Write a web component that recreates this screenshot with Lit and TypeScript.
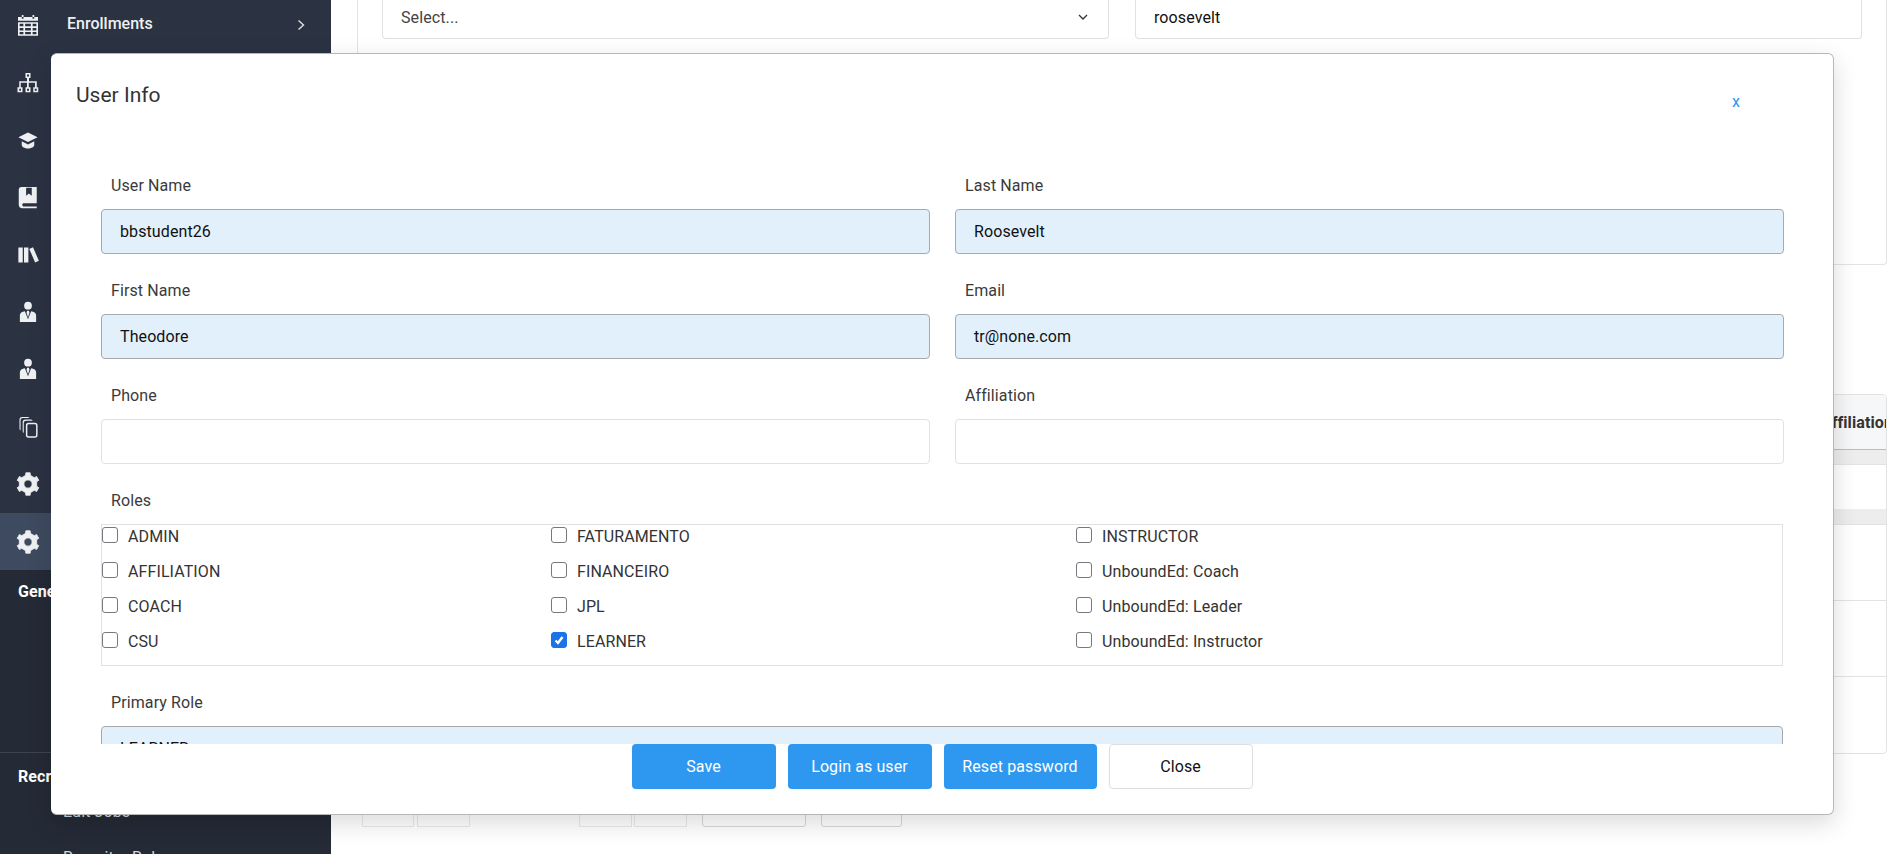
import { LitElement, css, html, svg } from 'lit';
import { customElement } from 'lit/decorators.js';

// six toothed cog, easier to compute than to write out by hand
function cogPath() {
    const points: string[] = [];
    for (let i = 0; i < 6; i++) {
        const mid = i * 60 - 90;
        for (const [offset, radius] of [[-30, 6.9], [-15, 7.2], [-11, 9.1], [11, 9.1], [15, 7.2]]) {
            const angle = ((mid + offset) * Math.PI) / 180;
            points.push(`${(12 + radius * Math.cos(angle)).toFixed(2)} ${(12 + radius * Math.sin(angle)).toFixed(2)}`);
        }
    }
    return `M${points.join('L')}ZM12 8.700a3.300 3.300 0 1 0 0 6.600 3.300 3.300 0 0 0 0-6.600z`;
}

const personIcon = svg`<path d="M12 3.800a3.100 3.100 0 1 1 0 6.200 3.100 3.100 0 0 1 0-6.200zM5.500 20v-5.400c0-1.800 1.700-3.100 4-3.300l2.500 6.400 2.500-6.400c2.300.2 4 1.500 4 3.300V20zM11.300 11h1.400l.5 1.500-1.200 3.700-1.200-3.700z"/>`;
const cogIcon = svg`<path d=${cogPath()} fill-rule="evenodd" stroke="#eef0f2" stroke-width=".7" stroke-linejoin="round"/>`;

const railIcons = [
    svg`<path transform="translate(0 .5)" d="M4 5h16v3H4zM7 3.500h1.400v3H7zM15.600 3.500H17v3h-1.400zM4 9.200h16V20H4zM5.300 10.500v2h3v-2zm4.400 0v2h4.600v-2zm6 0v2h3v-2zM5.300 13.800v2h3v-2zm4.400 0v2h4.600v-2zm6 0v2h3v-2zM5.300 17v1.800h3V17zm4.400 0v1.800h4.600V17zm6 0v1.800h3V17z" fill-rule="evenodd"/>`,
    svg`<path transform="translate(0 1.200)" d="M10 3.500h4v4h-1.200v2.700H19V15h1.200v4h-4v-4h1.400v-3.600h-5V15H14v4h-4v-4h1.200v-3.600h-5V15h1.400v4h-4v-4H5v-4.800h6.200V7.500H10zM11.200 4.700v1.600h1.600V4.700zM5 16.200v1.600h1.400v-1.600zm6.200 0v1.600h1.600v-1.600zm6.200 0v1.600h1.600v-1.600z" fill-rule="evenodd"/>`,
    svg`<path d="M12 6 4.300 9.800 12 13.600l7.700-3.800zM7 13v3c0 1.400 2.300 2.800 5 2.800s5-1.400 5-2.800v-3l-5 2.500z"/>`,
    svg`<path d="M6.500 4H19v13H8a1.700 1.700 0 0 0 0 2.500h11V21H7.500A3 3 0 0 1 4.600 18V6A2 2 0 0 1 6.500 4zM10.500 4.500V11l2.200-1.800 2.300 1.800V4.500z" fill-rule="evenodd"/>`,
    svg`<path transform="translate(0 -1.500)" d="M4.300 7.500h3.500v12H4.300zM8.800 7.500h3.500v12H8.800zM13 8.600l3-1.300 4.700 10.800-3 1.300z"/>`,
    personIcon,
    personIcon,
    svg`<g transform="translate(1.800 1.800) scale(.85)"><path d="M4 4.500A2.500 2.500 0 0 1 6.500 2.500h5a2.500 2.500 0 0 1 2 1H6.800A2 2 0 0 0 5 5.500v9.700a2.300 2.300 0 0 1-1-1.900zM7 7.500A2.500 2.500 0 0 1 9.500 5h5a2.500 2.500 0 0 1 2 1H9.800A2 2 0 0 0 8 8v9.700a2.300 2.300 0 0 1-1-1.900zM12.500 8h6A2.500 2.500 0 0 1 21 10.500v9A2.500 2.500 0 0 1 18.500 22h-6a2.500 2.500 0 0 1-2.500-2.500v-9A2.500 2.500 0 0 1 12.500 8zm0 1.400a1.100 1.100 0 0 0-1.100 1.100v9a1.100 1.100 0 0 0 1.100 1.100h6a1.100 1.100 0 0 0 1.100-1.100v-9a1.100 1.100 0 0 0-1.100-1.100z" fill-rule="evenodd"/></g>`,
    cogIcon,
];

const roleColumns = [
    ['ADMIN', 'AFFILIATION', 'COACH', 'CSU'],
    ['FATURAMENTO', 'FINANCEIRO', 'JPL', 'LEARNER'],
    ['INSTRUCTOR', 'UnboundEd: Coach', 'UnboundEd: Leader', 'UnboundEd: Instructor'],
];

const fields = [
    ['User Name', 'bbstudent26'],
    ['Last Name', 'Roosevelt'],
    ['First Name', 'Theodore'],
    ['Email', 'tr@none.com'],
    ['Phone', ''],
    ['Affiliation', ''],
];

// widths and trailing gaps of the pager boxes that peek out under the dialog
const pagerBoxes = [
    { width: 52, gap: 3, solid: false },
    { width: 53, gap: 109, solid: false },
    { width: 53, gap: 2, solid: false },
    { width: 53, gap: 15, solid: false },
    { width: 104, gap: 15, solid: true },
    { width: 81, gap: 0, solid: true },
];

@customElement('app-root')
export class AppRoot extends LitElement {
    static styles = css`
        :host {
            display: block;
            position: relative;
            height: 854px;
            overflow: hidden;
            background: #fff;
            font-family: Roboto, 'Liberation Sans', sans-serif;
            font-size: 16px;
            letter-spacing: 0.1px;
            color: #333;
        }

        .page {
            display: flex;
            height: 854px;
        }

        .sidebar {
            width: 331px;
            flex: none;
            display: flex;
            flex-direction: column;
            background: #2b3242;
            color: #eef0f2;
            overflow: hidden;
        }

        .item {
            height: 57.4px;
            flex: none;
            display: flex;
            align-items: center;
            padding-left: 13px;
            box-sizing: border-box;
        }

        .item.first {
            height: 50px;
            margin-bottom: 3.7px;
        }

        .item.active {
            background: #3e4a5f;
        }

        .item svg {
            width: 30px;
            height: 30px;
            fill: #eef0f2;
            flex: none;
        }

        .item-label {
            margin-left: 24px;
            margin-bottom: 3px;
            font-weight: 500;
            letter-spacing: 0;
            flex: 1;
        }

        .item .chevron {
            width: 12px;
            height: 14px;
            margin-right: 24px;
            fill: none;
            stroke: #dfe2e6;
            stroke-width: 1.4;
        }

        .lower {
            flex: 1;
            background: #242a36;
        }

        .lower-title {
            font-weight: 700;
            color: #fff;
            padding-left: 18px;
        }

        .general {
            margin-top: 11.5px;
        }

        .divider {
            height: 1px;
            background: #3c4350;
            margin-top: 151.5px;
        }

        .recruit {
            margin-top: 14px;
        }

        .sub-link {
            color: #d5d8dc;
            padding-left: 63px;
            margin-top: 16px;
        }

        .sub-link + .sub-link {
            margin-top: 27px;
        }

        .content {
            flex: 1;
            padding: 0 14px 0 26px;
            min-width: 0;
        }

        .top-panel {
            height: 265px;
            box-sizing: border-box;
            border: 1px solid #e2e3e5;
            border-top: none;
            border-radius: 0 0 4px 4px;
            padding: 0 24px;
        }

        .filters {
            display: grid;
            grid-template-columns: 727px 727px;
            column-gap: 26px;
        }

        .filter {
            height: 39px;
            box-sizing: border-box;
            border: 1px solid #dfe1e4;
            border-top: none;
            border-radius: 0 0 4px 4px;
            display: flex;
            align-items: center;
            justify-content: space-between;
            padding: 0 20px 4px 18px;
            color: #444;
        }

        .filter.value {
            color: #111;
        }

        .filter svg {
            width: 10px;
            height: 6px;
            fill: none;
            stroke: #333;
            stroke-width: 1.3;
        }

        .table {
            margin-top: 129px;
            height: 360px;
            box-sizing: border-box;
            border: 1px solid #e2e3e5;
            border-radius: 4px;
            overflow: hidden;
        }

        .thead {
            height: 54px;
            background: #f6f7f8;
            border-bottom: 1px solid #b9bcc0;
            display: flex;
            justify-content: flex-end;
            align-items: center;
            font-weight: 700;
            white-space: nowrap;
            overflow: hidden;
        }

        .thead span {
            margin-right: -7px;
        }

        .band {
            height: 15px;
            background: #ededed;
            border-bottom: 1px solid #e2e3e5;
        }

        .band.short {
            height: 14px;
        }

        .blank {
            height: 44px;
        }

        .row {
            height: 75px;
            border-bottom: 1px solid #e2e3e5;
        }

        .pager {
            display: flex;
            margin: 36px 0 0 5px;
        }

        .pager div {
            box-sizing: border-box;
            height: 37px;
            border: 1px solid #e9e9e9;
        }

        .pager div.solid {
            border-color: #d8d8d8;
            border-radius: 3px;
        }

        .modal {
            position: absolute;
            left: 51px;
            top: 53px;
            width: 1783px;
            height: 762px;
            box-sizing: border-box;
            background: #fff;
            border: 1px solid #b5b7ba;
            border-left: none;
            border-radius: 6px;
            box-shadow: 0 8px 24px rgba(0, 0, 0, 0.15);
            display: flex;
            flex-direction: column;
        }

        .modal-head {
            height: 120px;
            flex: none;
            display: flex;
            justify-content: space-between;
            padding: 25px 93px 0 25px;
            box-sizing: border-box;
        }

        .modal-title {
            font-size: 21px;
            line-height: 32px;
            letter-spacing: 0;
            color: #333;
        }

        .modal-x {
            color: #2e98f1;
            font-size: 16px;
            line-height: 24px;
            margin-top: 11px;
        }

        .modal-body {
            flex: none;
            height: 570px;
            overflow: hidden;
            padding: 0 50px;
        }

        .grid {
            display: grid;
            grid-template-columns: 829px 829px;
            column-gap: 25px;
        }

        .field-label,
        .group-label {
            padding-left: 10px;
            height: 35px;
            line-height: 24px;
            color: #3a3a3a;
        }

        .input {
            height: 45px;
            box-sizing: border-box;
            border: 1px solid #a6aaaf;
            border-radius: 4px;
            background: #e2f0fc;
            color: #111;
            padding: 0 18px;
            display: flex;
            align-items: center;
            margin-bottom: 25px;
        }

        .input.empty {
            background: #fff;
            border-color: #dfe1e4;
        }

        .roles {
            height: 142px;
            box-sizing: border-box;
            width: 1682px;
            border: 1px solid #dfe1e4;
            display: grid;
            grid-template-columns: 449px 525px 1fr;
        }

        .role {
            height: 35px;
            display: flex;
            position: relative;
            padding-left: 26px;
            line-height: 24px;
            color: #333;
        }

        .check {
            position: absolute;
            left: 0;
            top: 2px;
            width: 16px;
            height: 16px;
            box-sizing: border-box;
            border: 1px solid #76797d;
            border-radius: 3px;
            background: #fff;
        }

        .check.on {
            background: #1a73e8;
            border-color: #1a73e8;
            display: flex;
            align-items: center;
            justify-content: center;
        }

        .check svg {
            width: 12px;
            height: 12px;
            fill: none;
            stroke: #fff;
            stroke-width: 2.4;
        }

        .primary-label {
            margin-top: 25px;
        }

        .modal-foot {
            flex: 1;
            display: flex;
            justify-content: center;
            gap: 12px;
        }

        .btn {
            height: 45px;
            width: 144px;
            box-sizing: border-box;
            border-radius: 4px;
            background: #2e98f1;
            color: #fff;
            display: flex;
            align-items: center;
            justify-content: center;
        }

        .btn.wide {
            width: 153px;
        }

        .btn.plain {
            background: #fff;
            border: 1px solid #dcdee1;
            color: #111;
        }
    `;

    render() {
        return html`
            <div class="page">
                <nav class="sidebar">
                    <div class="item first">
                        <svg viewBox="0 0 24 24">${railIcons[0]}</svg>
                        <span class="item-label">Enrollments</span>
                        <svg class="chevron" viewBox="0 0 12 14"><path d="M3.500 2.500 8.500 7l-5 4.500" /></svg>
                    </div>
                    ${railIcons.slice(1).map(
                        (icon) => html`<div class="item"><svg viewBox="0 0 24 24">${icon}</svg></div>`,
                    )}
                    <div class="item active"><svg viewBox="0 0 24 24">${cogIcon}</svg></div>
                    <div class="lower">
                        <div class="lower-title general">General</div>
                        <div class="divider"></div>
                        <div class="lower-title recruit">Recruiting</div>
                        <div class="sub-link">Edit Jobs</div>
                        <div class="sub-link">Recruiter Roles</div>
                    </div>
                </nav>
                <main class="content">
                    <div class="top-panel">
                        <div class="filters">
                            <div class="filter">
                                <span>Select...</span>
                                <svg viewBox="0 0 10 6"><path d="M1 1 5 5l4-4" /></svg>
                            </div>
                            <div class="filter value"><span>roosevelt</span></div>
                        </div>
                    </div>
                    <div class="table">
                        <div class="thead"><span>Affiliation</span></div>
                        <div class="band short"></div>
                        <div class="blank"></div>
                        <div class="band"></div>
                        <div class="row"></div>
                        <div class="row"></div>
                    </div>
                    <div class="pager">
                        ${pagerBoxes.map(
                            (box) => html`<div
                                class=${box.solid ? 'solid' : ''}
                                style="width:${box.width}px;margin-right:${box.gap}px"
                            ></div>`,
                        )}
                    </div>
                </main>
            </div>
            <section class="modal">
                <header class="modal-head">
                    <div class="modal-title">User Info</div>
                    <div class="modal-x">x</div>
                </header>
                <div class="modal-body">
                    <div class="grid">
                        ${fields.map(
                            ([label, value]) => html`
                                <div>
                                    <div class="field-label">${label}</div>
                                    <div class="input ${value ? '' : 'empty'}">${value}</div>
                                </div>
                            `,
                        )}
                    </div>
                    <div class="group-label">Roles</div>
                    <div class="roles">
                        ${roleColumns.map(
                            (column) => html`
                                <div>
                                    ${column.map(
                                        (role) => html`
                                            <div class="role">
                                                ${role === 'LEARNER'
                                                    ? html`<span class="check on"><svg viewBox="0 0 12 12"><path d="M2.500 6.500 5 9l4.500-6" /></svg></span>`
                                                    : html`<span class="check"></span>`}
                                                <span>${role}</span>
                                            </div>
                                        `,
                                    )}
                                </div>
                            `,
                        )}
                    </div>
                    <div class="group-label primary-label">Primary Role</div>
                    <div class="input">LEARNER</div>
                </div>
                <footer class="modal-foot">
                    <div class="btn">Save</div>
                    <div class="btn">Login as user</div>
                    <div class="btn wide">Reset password</div>
                    <div class="btn plain">Close</div>
                </footer>
            </section>
        `;
    }
}
